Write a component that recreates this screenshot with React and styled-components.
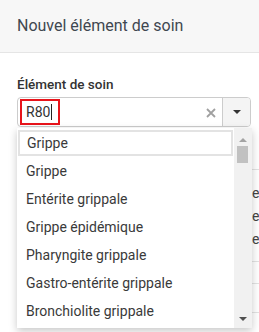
import React from "react";
import styled, { createGlobalStyle } from "styled-components";

const GlobalStyle = createGlobalStyle`
  html, body {
    margin: 0;
    padding: 0;
    width: 259px;
    height: 332px;
    overflow: hidden;
    background: #ffffff;
    font-family: Roboto, "Liberation Sans", sans-serif;
    color: #333333;
  }
  * { box-sizing: border-box; }
`;

const Page = styled.div`
  width: 259px;
  height: 332px;
  overflow: hidden;
  position: relative;
`;

const Header = styled.div`
  height: 53px;
  background: #f7f7f7;
  border-bottom: 1px solid #e5e5e5;
  padding: 0 17px 2px;
  display: flex;
  align-items: center;
`;

const Title = styled.h4`
  margin: 0;
  font-size: 16px;
  font-weight: 400;
  color: #3f4750;
  white-space: nowrap;
`;

const Body = styled.div`
  padding: 21px 8px 0 17px;
`;

const Label = styled.label`
  display: block;
  font-size: 13.5px;
  font-weight: 500;
  line-height: 20px;
  color: #333333;
  margin-bottom: 3px;
`;

const Combo = styled.div`
  position: relative;
  height: 30px;
  width: 234px;
  border: 1px solid #cccccc;
  border-radius: 4px;
  display: flex;
  align-items: stretch;
  background: #ffffff;
  z-index: 2;
`;

const InputArea = styled.div`
  flex: 1;
  display: flex;
  align-items: center;
  padding-left: 2px;
`;

const Annotated = styled.span`
  display: inline-flex;
  align-items: center;
  height: 26px;
  border: 2px solid #e8141b;
  padding: 0 6px 0 4px;
  font-size: 14px;
  color: #333333;
`;

const Caret = styled.span`
  display: inline-block;
  width: 1px;
  height: 16px;
  background: #222222;
  margin-left: 1px;
`;

const ClearBtn = styled.span`
  width: 22px;
  display: flex;
  align-items: center;
  justify-content: center;
  padding-top: 2px;
`;

const ToggleBtn = styled.span`
  width: 28px;
  border-left: 1px solid #cccccc;
  background: #f4f4f4;
  border-radius: 0 3px 3px 0;
  display: flex;
  align-items: center;
  justify-content: center;
`;

const Dropdown = styled.div`
  position: absolute;
  top: calc(100% + 2px);
  left: -1px;
  width: 235px;
  height: 200px;
  background: #ffffff;
  box-shadow: 0 3px 8px rgba(0, 0, 0, 0.22);
  display: flex;
  overflow: hidden;
`;

const List = styled.ul`
  list-style: none;
  margin: 0;
  padding: 1px 0 0;
  flex: 1;
  overflow: hidden;
`;

const Item = styled.li`
  height: ${(p) => (p.$active ? "26px" : "28px")};
  margin: ${(p) => (p.$active ? "1px 1px 1px 1px" : "0")};
  border: ${(p) => (p.$active ? "2px solid #e3e3e3" : "none")};
  padding-left: ${(p) => (p.$active ? "7px" : "9px")};
  display: flex;
  align-items: center;
  font-size: 14px;
  color: #3a3a3a;
  white-space: nowrap;
`;

const ScrollTrack = styled.div`
  width: 18px;
  background: #f1f1f1;
  display: flex;
  flex-direction: column;
  align-items: center;
  padding: 10px 1px 7px 0;
`;

const Arrow = styled.span`
  width: 0;
  height: 0;
  border-left: 4px solid transparent;
  border-right: 4px solid transparent;
  ${(p) =>
    p.$up
      ? `border-bottom: 4px solid #a3a3a3;`
      : `border-top: 4px solid ${p.$dark ? "#333333" : "#505050"};`}
`;

const Thumb = styled.span`
  width: 11px;
  height: 17px;
  background: #c1c1c1;
  margin-top: 4px;
`;

const Spacer = styled.span`
  flex: 1;
`;

const Table = styled.div`
  margin-top: 42px;
  width: 300px;
  border-top: 1px solid #e3e3e3;
`;

const Row = styled.div`
  border-bottom: 1px solid #e3e3e3;
  height: ${(p) => p.$h}px;
  padding: ${(p) => (p.$pad ? "12px 0 0 0" : "0")};
`;

const Line = styled.div`
  height: 23px;
  line-height: 23px;
  font-size: 14px;
  color: #444444;
  padding-left: 227px;
  white-space: nowrap;
`;

const items = [
  "Grippe",
  "Grippe",
  "Entérite grippale",
  "Grippe épidémique",
  "Pharyngite grippale",
  "Gastro-entérite grippale",
  "Bronchiolite grippale",
];

export default function App() {
  return (
    <Page>
      <GlobalStyle />
      <Header>
        <Title>Nouvel élément de soin</Title>
      </Header>
      <Body>
        <Label>Élément de soin</Label>
        <Combo>
          <InputArea>
            <Annotated>
              R80
              <Caret />
            </Annotated>
          </InputArea>
          <ClearBtn>
            <svg width="10" height="10" viewBox="0 0 10 10">
              <path d="M1 1 L9 9 M9 1 L1 9" stroke="#a0a0a0" strokeWidth="1.8" />
            </svg>
          </ClearBtn>
          <ToggleBtn>
            <Arrow $dark />
          </ToggleBtn>
          <Dropdown>
            <List>
              {items.map((t, i) => (
                <Item key={i} $active={i === 0}>
                  {t}
                </Item>
              ))}
            </List>
            <ScrollTrack>
              <Arrow $up />
              <Thumb />
              <Spacer />
              <Arrow />
            </ScrollTrack>
          </Dropdown>
        </Combo>
        <Table>
          <Row $h={92} $pad>
            <Line>de l</Line>
            <Line>de c</Line>
            <Line>de s</Line>
          </Row>
          <Row $h={22} />
          <Row $h={29} />
          <Row $h={30} />
        </Table>
      </Body>
    </Page>
  );
}
